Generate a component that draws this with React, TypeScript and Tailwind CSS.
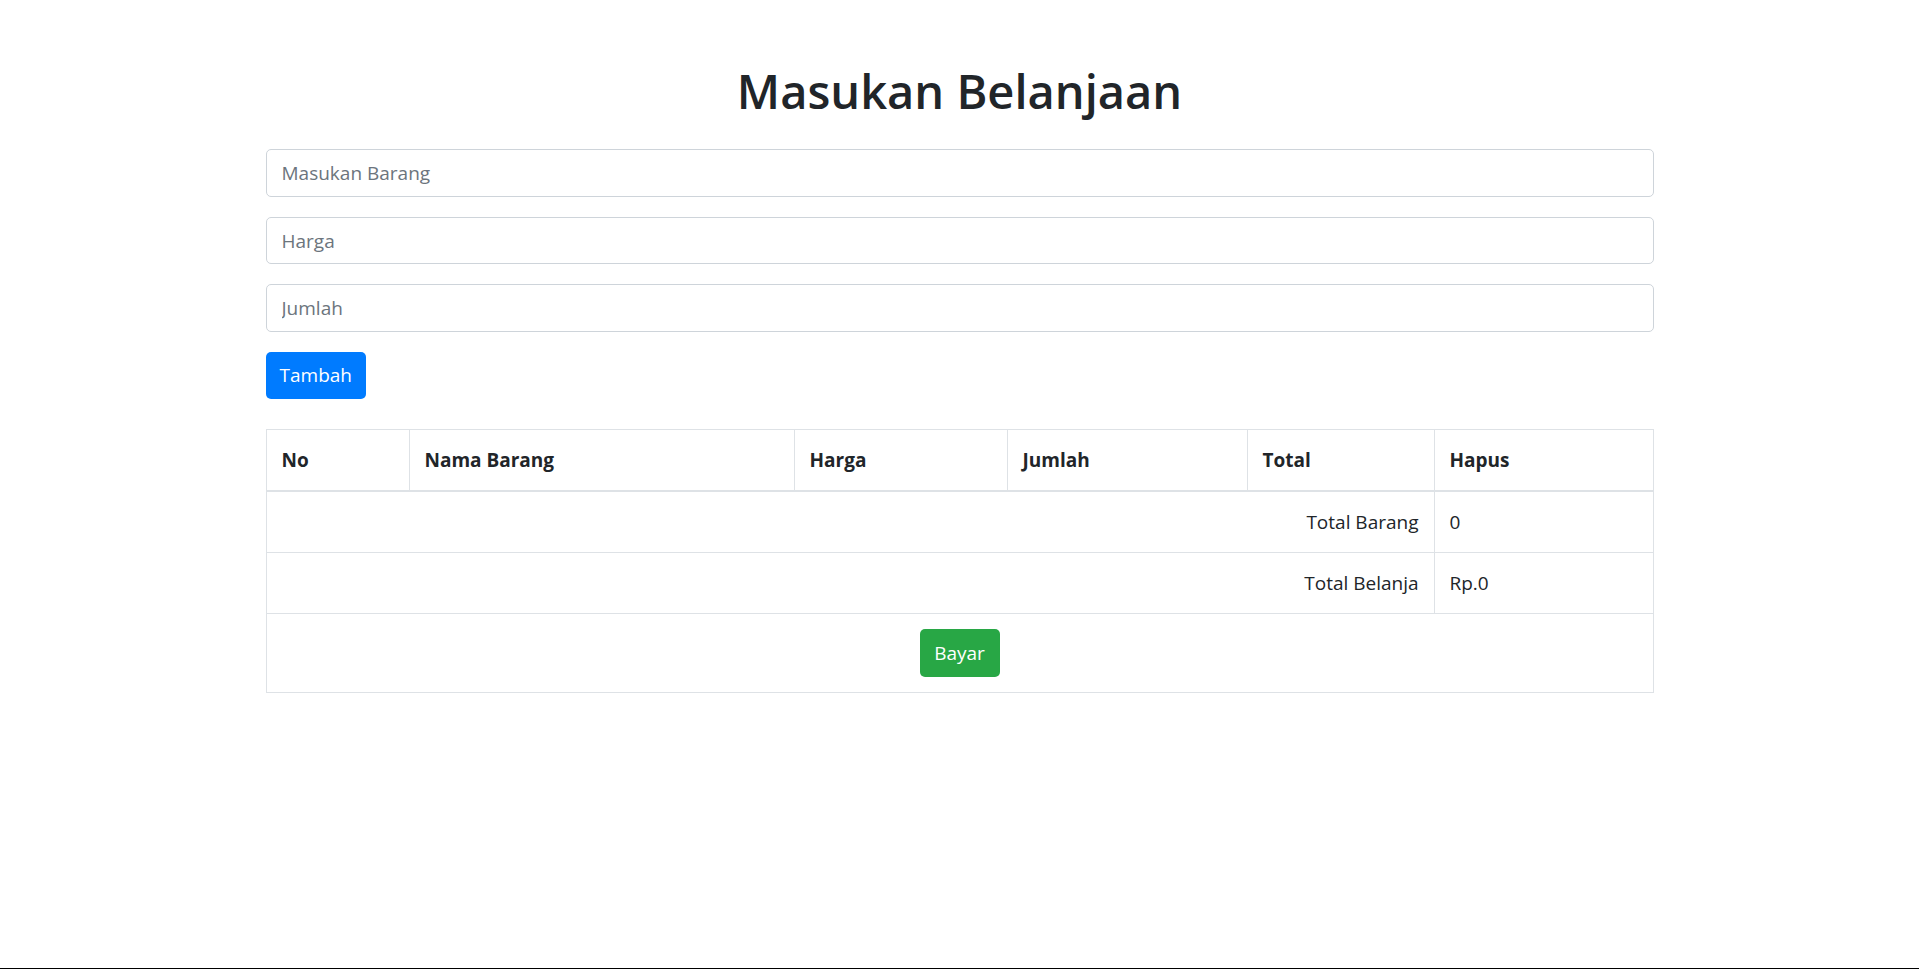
import React from "react";

const App = () => {
  return (
    <div className="min-h-[969px] border-b border-black bg-white text-[#212529] font-['Open_Sans',sans-serif]">
      <div className="w-[1388px] mx-auto pt-[61px]">
        <h1 className="text-center text-[47px] font-semibold leading-[60px] mb-[28px]">
          Masukan Belanjaan
        </h1>
        <form onSubmit={(e) => e.preventDefault()}>
          <input
            type="text"
            placeholder="Masukan Barang"
            className="block w-full h-[47.5px] mb-[20px] px-[15px] pt-[1px] border border-[#ced4da] rounded-[5px] text-[19px] text-[#495057] placeholder:text-[#6c757d] outline-none"
          />
          <input
            type="text"
            placeholder="Harga"
            className="block w-full h-[47.5px] mb-[20px] px-[15px] pt-[1px] border border-[#ced4da] rounded-[5px] text-[19px] text-[#495057] placeholder:text-[#6c757d] outline-none"
          />
          <input
            type="text"
            placeholder="Jumlah"
            className="block w-full h-[47.5px] mb-[20px] px-[15px] pt-[1px] border border-[#ced4da] rounded-[5px] text-[19px] text-[#495057] placeholder:text-[#6c757d] outline-none"
          />
          <button className="block w-[100.5px] h-[47.5px] bg-[#007bff] text-white text-[19px] rounded-[5px]">
            Tambah
          </button>
        </form>

        <table className="w-full mt-[30px] table-fixed border-collapse border border-[#dee2e6] text-[19px] leading-[30px]">
          <thead>
            <tr>
              <th className="w-[143px] text-left font-bold px-[15px] py-[15px] border border-[#dee2e6] border-b-2">No</th>
              <th className="w-[385px] text-left font-bold px-[15px] py-[15px] border border-[#dee2e6] border-b-2">Nama Barang</th>
              <th className="w-[213px] text-left font-bold px-[15px] py-[15px] border border-[#dee2e6] border-b-2">Harga</th>
              <th className="w-[240px] text-left font-bold px-[15px] py-[15px] border border-[#dee2e6] border-b-2">Jumlah</th>
              <th className="w-[187px] text-left font-bold px-[15px] py-[15px] border border-[#dee2e6] border-b-2">Total</th>
              <th className="text-left font-bold px-[15px] py-[15px] border border-[#dee2e6] border-b-2">Hapus</th>
            </tr>
          </thead>
          <tbody>
            <tr>
              <td colSpan={5} className="text-right px-[15px] py-[15px] border border-[#dee2e6]">Total Barang</td>
              <td className="px-[15px] py-[15px] border border-[#dee2e6]">0</td>
            </tr>
            <tr>
              <td colSpan={5} className="text-right px-[15px] py-[15px] border border-[#dee2e6]">Total Belanja</td>
              <td className="px-[15px] py-[15px] border border-[#dee2e6]">Rp.0</td>
            </tr>
            <tr>
              <td colSpan={6} className="text-center px-[15px] py-[15px] border border-[#dee2e6]">
                <button className="inline-block align-middle w-[80px] h-[47.5px] bg-[#28a745] text-white rounded-[5px]">
                  Bayar
                </button>
              </td>
            </tr>
          </tbody>
        </table>
      </div>
    </div>
  );
};

export default App;
